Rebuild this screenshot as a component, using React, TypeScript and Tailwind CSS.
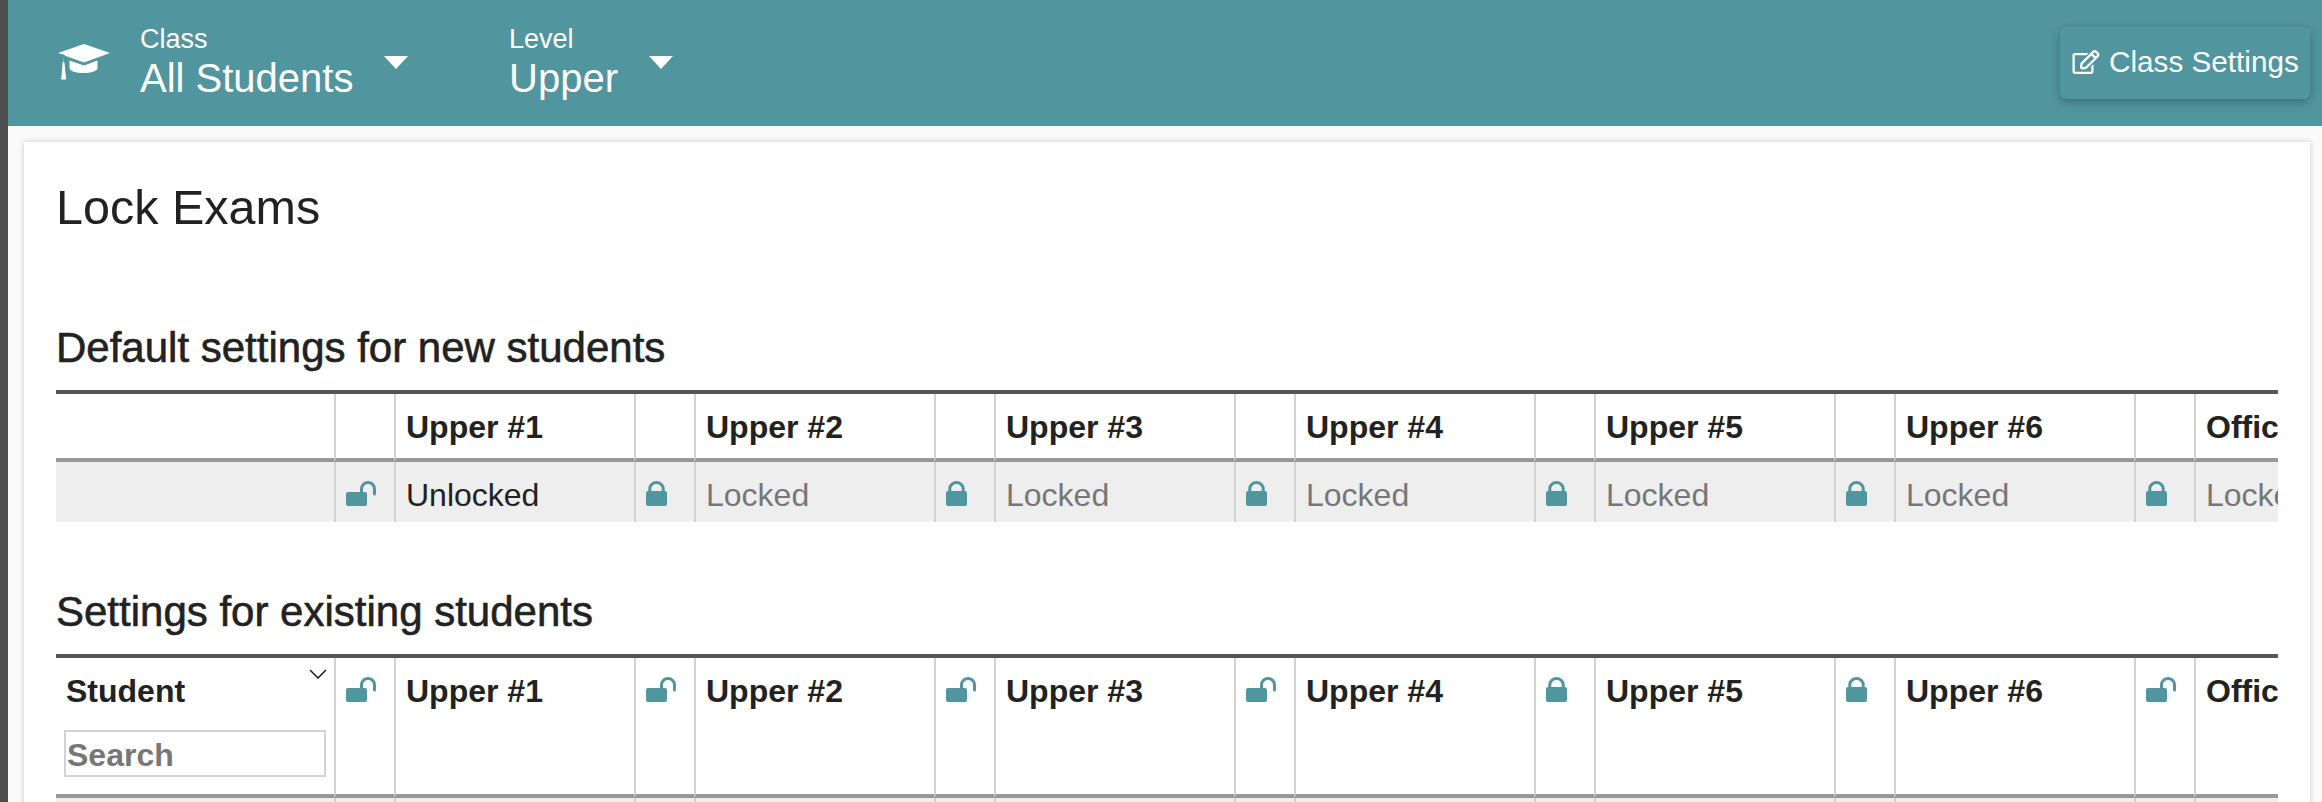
import { FaRegEdit } from 'react-icons/fa';

const TEAL = '#51959f';

const exams = ['Upper #1', 'Upper #2', 'Upper #3', 'Upper #4', 'Upper #5', 'Upper #6', 'Office'];
const defaultLocks = [false, true, true, true, true, true, true];
const existingLocks = [false, false, false, false, true, true, false];

function LockIcon({ locked }: { locked: boolean }) {
  if (locked) {
    return (
      <svg width="21" height="25" viewBox="0 0 21 25" className="block">
        <rect x="0" y="10" width="21" height="15" rx="2" fill={TEAL} />
        <path d="M3.8 11V7.6a6.7 6.1 0 0 1 13.4 0V11" fill="none" stroke={TEAL} strokeWidth="3" />
      </svg>
    );
  }
  return (
    <svg width="30" height="25" viewBox="0 0 30 25" className="block">
      <rect x="0" y="11" width="21" height="14" rx="2" fill={TEAL} />
      <path d="M15.5 12V8a6.5 6.5 0 0 1 13 0v5" fill="none" stroke={TEAL} strokeWidth="3" strokeLinecap="round" />
    </svg>
  );
}

function Caret() {
  return (
    <svg width="24" height="13" viewBox="0 0 24 13" className="block mt-[-2px]">
      <path d="M0 0h24L12 13z" fill="#fff" />
    </svg>
  );
}

function GradCap() {
  return (
    <svg width="52" height="36" viewBox="0 0 52 36" className="mb-[3px] block">
      <path d="M26 0 52 9 26 18.5 7 11.8C5.8 13.2 5.4 15 5.3 17.5 6.3 18 6.8 19 6.6 20L8.2 35.5H3.2L4.5 20C4.3 19 4.7 18 5.6 17.5 5.7 14.6 6.2 12.6 7.2 11L0 9z" fill="#fff" />
      <path d="M11.5 16.5 26 21.6 39.5 16.5V24C39.5 27 33 29 25.5 29S11.5 27 11.5 24z" fill="#fff" />
    </svg>
  );
}

function Selector({ label, value, width }: { label: string; value: string; width: string }) {
  return (
    <div className={`flex items-center ${width}`}>
      <div className="flex flex-col">
        <span className="mt-[-1px] mb-[1px] text-[27px] leading-[30px] text-white">{label}</span>
        <span className="text-[40px] leading-[46px] text-white">{value}</span>
      </div>
      <div className="ml-[31px]">
        <Caret />
      </div>
    </div>
  );
}

function LockTable({ locks, existing }: { locks: boolean[]; existing: boolean }) {
  const rowLocks = defaultLocks;
  return (
    <div className="w-[2222px] overflow-hidden border-t-4 border-[#555555]">
      <table className="table-fixed w-[2378px] border-separate border-spacing-0 text-[32px] leading-[36px] text-[#222222]">
        <colgroup>
          <col className="w-[278px]" />
          {exams.map((exam) => [
            <col key={`${exam}-lock`} className="w-[60px]" />,
            <col key={exam} className="w-[240px]" />,
          ])}
        </colgroup>
        <thead>
          <tr>
            <th className={`relative border-b-4 border-[#999999] align-top text-left font-bold ${existing ? 'h-[140px] pl-[10px] pt-[15px]' : 'h-[68px]'}`}>
              {existing && (
                <>
                  <div>Student</div>
                  <svg width="18" height="10" viewBox="0 0 18 10" className="absolute right-[7px] top-[11px]">
                    <path d="M1 1l8 8 8-8" fill="none" stroke="#222222" strokeWidth="1.6" />
                  </svg>
                  <input
                    placeholder="Search"
                    className="mt-[21px] ml-[-2px] block h-[47px] w-[262px] border-2 border-[#d2d2d2] bg-white px-[1px] pt-[3px] font-bold outline-none placeholder:text-[#777777]"
                  />
                </>
              )}
            </th>
            {exams.map((exam, i) => [
              <th key={`${exam}-lock`} className="border-b-4 border-l-2 border-b-[#999999] border-l-[#d2d2d2] pl-[10px] pt-[19px] align-top">
                {existing && <LockIcon locked={locks[i]} />}
              </th>,
              <th key={exam} className="border-b-4 border-l-2 border-b-[#999999] border-l-[#d2d2d2] pl-[10px] pt-[15px] align-top text-left font-bold">
                {exam}
              </th>,
            ])}
          </tr>
        </thead>
        <tbody>
          <tr className="bg-[#eeeeee]">
            <td className="h-[60px]" />
            {exams.map((exam, i) => [
              <td key={`${exam}-lock`} className="border-l-2 border-[#d2d2d2] pl-[10px] pt-[19px] align-top">
                {!existing && <LockIcon locked={rowLocks[i]} />}
              </td>,
              <td key={exam} className={`border-l-2 border-[#d2d2d2] pl-[10px] pt-[15px] align-top whitespace-nowrap ${rowLocks[i] ? 'text-[#777777]' : ''}`}>
                {!existing && (rowLocks[i] ? 'Locked' : 'Unlocked')}
              </td>,
            ])}
          </tr>
        </tbody>
      </table>
    </div>
  );
}

export default function App() {
  return (
    <div className="flex h-[802px] overflow-hidden bg-[#fafafa] font-['Liberation_Sans',Arial,sans-serif]">
      <div className="w-[8px] shrink-0 bg-[#4d4d4d]" />
      <div className="flex min-w-0 flex-1 flex-col">
        <header className="flex h-[126px] shrink-0 items-center bg-[#51959f] pl-[50px] pr-[12px]">
          <GradCap />
          <div className="ml-[30px] flex items-center">
            <Selector label="Class" value="All Students" width="w-[369px]" />
            <Selector label="Level" value="Upper" width="w-auto" />
          </div>
          <button className="ml-auto flex h-[72px] w-[250px] items-center rounded-[6px] bg-[#51959f] pb-[2px] pl-[12px] text-[29.7px] text-white shadow-[0_3px_10px_rgba(0,0,0,0.25)]">
            <FaRegEdit className="mr-[9px] h-[24px] w-[28px]" />
            Class Settings
          </button>
        </header>
        <main className="ml-[16px] mr-[12px] mt-[16px] flex-1 bg-white pl-[32px] pt-[37px] shadow-[0_0_6px_rgba(0,0,0,0.2)]">
          <h1 className="text-[48.5px] leading-[56px] text-[#222222]">Lock Exams</h1>
          <h2 className="mb-[18px] mt-[89px] text-[42px] leading-[48px] text-[#222222] [-webkit-text-stroke:0.6px_#222222]">
            Default settings for new students
          </h2>
          <LockTable locks={defaultLocks} existing={false} />
          <h2 className="mb-[18px] mt-[66px] text-[42px] leading-[48px] text-[#222222] [-webkit-text-stroke:0.6px_#222222]">
            Settings for existing students
          </h2>
          <LockTable locks={existingLocks} existing />
        </main>
      </div>
    </div>
  );
}
